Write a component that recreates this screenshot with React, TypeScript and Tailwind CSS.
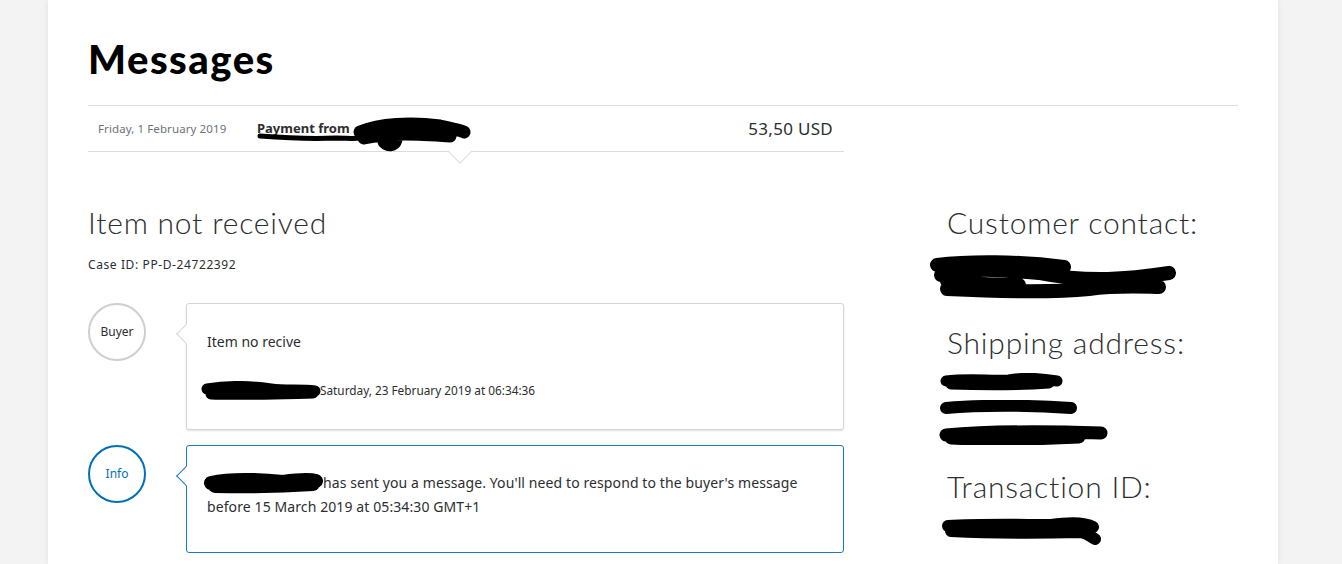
import React from 'react';

const body = { fontFamily: '"Noto Sans", "Open Sans", sans-serif' };
const head = { fontFamily: 'Lato, "Noto Sans", sans-serif' };

function Scribble({ w, h, d, sw = 12 }: { w: number; h: number; d: string; sw?: number }) {
  return (
    <svg width={w} height={h} viewBox={`0 0 ${w} ${h}`} className="block">
      <path d={d} fill="none" stroke="#000" strokeWidth={sw} strokeLinecap="round" strokeLinejoin="round" />
    </svg>
  );
}

function Avatar({ label, blue }: { label: string; blue?: boolean }) {
  return (
    <div
      className={`w-[58px] h-[58px] shrink-0 rounded-full border-2 flex items-center justify-center text-[12px] ${
        blue ? 'border-[#0070ba] text-[#0070ba]' : 'border-[#cfcfcf] text-[#2c2e2f]'
      }`}
    >
      {label}
    </div>
  );
}

function Bubble({ blue, children, h }: { blue?: boolean; children: React.ReactNode; h: string }) {
  return (
    <div
      className={`relative flex-1 bg-white rounded-[3px] border ${h} ${
        blue ? 'border-[#1b7bc2]' : 'border-[#d6d6d6] shadow-[0_1px_2px_rgba(0,0,0,0.12)]'
      }`}
    >
      <div
        className={`absolute left-[-8px] top-[23px] w-[14px] h-[14px] rotate-45 bg-white border-l border-b ${
          blue ? 'border-[#1b7bc2]' : 'border-[#d6d6d6]'
        }`}
      />
      <div className="relative">{children}</div>
    </div>
  );
}

const sideHead = 'text-[30px] leading-[40px] font-light text-[#2c2e2f] tracking-[0.8px]';

export default function App() {
  return (
    <div className="min-h-screen bg-[#f3f3f3] overflow-hidden" style={body}>
      <div className="ml-[48px] w-[1230px] min-h-[564px] bg-white shadow-[0_0_6px_rgba(0,0,0,0.08)] px-[40px] pt-[34px]">
        <h1 className="text-[40px] leading-[50px] font-black text-black tracking-[1.5px]" style={head}>
          Messages
        </h1>

        <div className="mt-[21px] border-t border-[#dcdcdc]">
          <div className="relative w-[756px] h-[46px] border-b border-[#dcdcdc] flex items-center">
            <span className="ml-[10px] w-[159px] text-[11.5px] tracking-[0.1px] text-[#6c7378]">Friday, 1 February 2019</span>
            <span className="text-[13px] font-bold text-[#2c2e2f]">Payment from</span>
            <span className="ml-auto mr-[11px] text-[17px] tracking-[0.3px] text-[#2c2e2f]">53,50 USD</span>
            <div className="absolute left-[168px] top-[20px]">
              <Scribble w={110} h={20} sw={5} d="M4 10 C30 12 60 13 80 12 C90 12 96 13 104 12" />
            </div>
            <div className="absolute left-[262px] top-[6px]">
              <Scribble
                w={124}
                h={40}
                sw={13}
                d="M10 20 C30 12 60 10 90 14 C100 16 110 18 114 20 M14 26 C40 20 70 22 100 24 M34 30 C38 34 44 34 46 28"
              />
            </div>
            <div className="absolute left-[363px] top-[45px] w-[18px] h-[18px] rotate-45 bg-white border-r border-b border-[#dcdcdc] -translate-y-1/2" />
          </div>
        </div>

        <div className="flex mt-[50px]">
          <div className="w-[756px]">
            <h2 className={sideHead} style={head}>
              Item not received
            </h2>
            <div className="mt-[14px] text-[12px] tracking-[0.6px] text-[#2c2e2f]">Case ID: PP-D-24722392</div>

            <div className="mt-[29px] flex gap-[40px]">
              <Avatar label="Buyer" />
              <Bubble h="h-[127px]">
                <div className="pl-[20px] pt-[27px] text-[14px] text-[#2c2e2f]">Item no recive</div>
                <div className="pl-[14px] mt-[29px] flex items-center text-[11.8px] text-[#2c2e2f]">
                  <Scribble w={120} h={20} sw={11} d="M6 8 C30 4 50 5 70 8 C85 10 100 8 114 10 M10 13 C40 14 70 13 112 12" />
                  <span className="-ml-[1px]">Saturday, 23 February 2019 at 06:34:36</span>
                </div>
              </Bubble>
            </div>

            <div className="mt-[15px] flex gap-[40px]">
              <Avatar label="Info" blue />
              <Bubble blue h="h-[108px]">
                <div className="pl-[20px] pr-[40px] pt-[25px] text-[14px] leading-[24px] tracking-[0.1px] text-[#2c2e2f]">
                  <span className="inline-block align-middle w-[118px] h-[20px] -mt-[4px] -ml-[4px] mr-[2px]">
                    <Scribble w={120} h={22} sw={14} d="M8 11 C30 6 60 8 80 10 C95 8 105 7 113 9 M12 14 C50 15 80 14 110 12" />
                  </span>
                  has sent you a message. You'll need to respond to the buyer's message before 15 March 2019 at
                  05:34:30 GMT+1
                </div>
              </Bubble>
            </div>
          </div>

          <div className="ml-[103px]">
            <h3 className={sideHead} style={head}>
              Customer contact:
            </h3>
            <div className="-ml-[18px] mt-[13px]">
              <Scribble
                w={250}
                h={46}
                sw={14}
                d="M8 10 C40 6 90 6 135 12 M12 20 C20 12 60 14 110 18 C160 28 200 24 240 18 M18 34 C60 36 120 38 160 34 C190 30 220 32 230 32 M18 26 C40 28 60 30 90 30"
              />
            </div>
            <h3 className={`mt-[21px] ${sideHead}`} style={head}>
              Shipping address:
            </h3>
            <div className="-ml-[8px] mt-[11px] flex flex-col gap-[9px]">
              <Scribble w={126} h={18} sw={11} d="M7 8 C30 5 50 8 70 7 C85 4 100 5 118 8 M12 11 C40 12 80 12 110 10" />
              <Scribble w={140} h={16} sw={12} d="M7 8 C40 5 90 5 132 8" />
              <Scribble w={170} h={20} sw={13} d="M7 10 C40 7 100 6 162 8 M12 13 C50 15 100 14 140 12" />
            </div>
            <h3 className={`mt-[21px] ${sideHead}`} style={head}>
              Transaction ID:
            </h3>
            <div className="-ml-[6px] mt-[11px]">
              <Scribble w={162} h={30} sw={12} d="M7 9 C40 7 80 8 110 8 C130 5 145 6 152 10 M10 14 C50 16 100 16 140 15 C148 17 150 20 154 22" />
            </div>
          </div>
        </div>
      </div>
    </div>
  );
}
